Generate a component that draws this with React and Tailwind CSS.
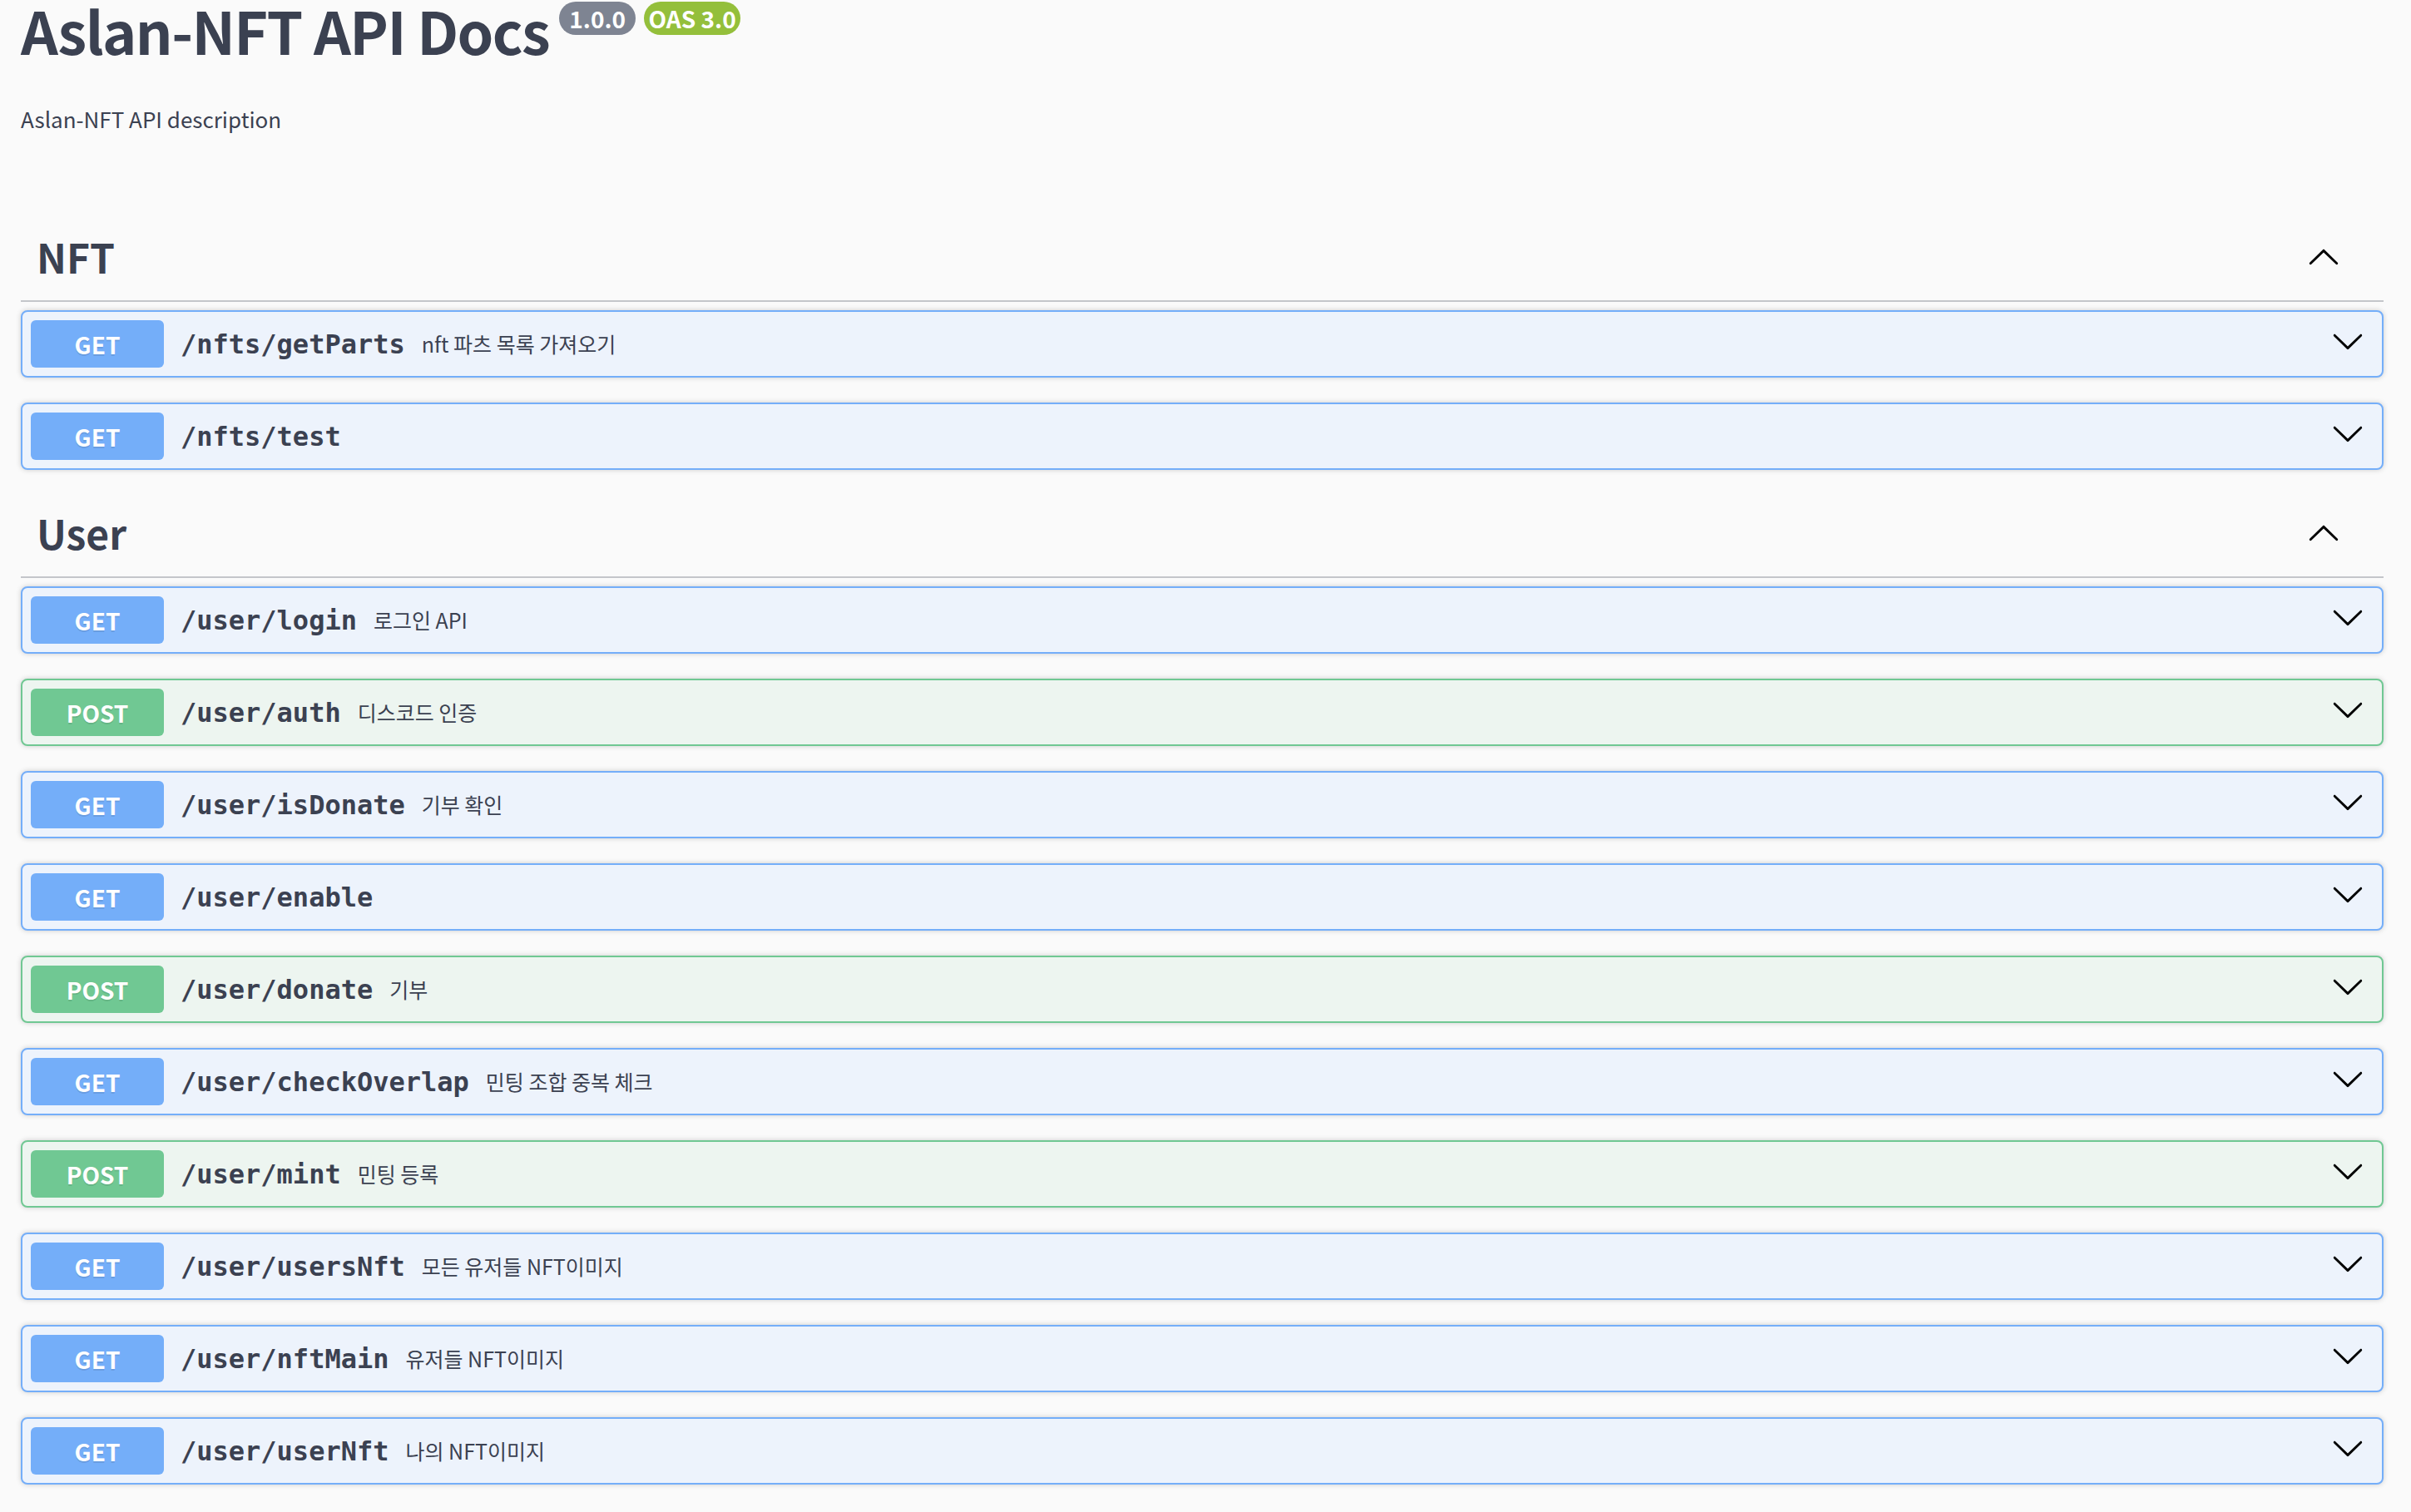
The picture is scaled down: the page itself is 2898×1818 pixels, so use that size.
import React from 'react';

const sans = "font-['Noto_Sans_CJK_KR','Noto_Sans',sans-serif]";

const sections = [
  {
    name: 'NFT',
    ops: [
      { method: 'GET', path: '/nfts/getParts', desc: 'nft 파츠 목록 가져오기' },
      { method: 'GET', path: '/nfts/test', desc: '' },
    ],
  },
  {
    name: 'User',
    ops: [
      { method: 'GET', path: '/user/login', desc: '로그인 API' },
      { method: 'POST', path: '/user/auth', desc: '디스코드 인증' },
      { method: 'GET', path: '/user/isDonate', desc: '기부 확인' },
      { method: 'GET', path: '/user/enable', desc: '' },
      { method: 'POST', path: '/user/donate', desc: '기부' },
      { method: 'GET', path: '/user/checkOverlap', desc: '민팅 조합 중복 체크' },
      { method: 'POST', path: '/user/mint', desc: '민팅 등록' },
      { method: 'GET', path: '/user/usersNft', desc: '모든 유저들 NFT이미지' },
      { method: 'GET', path: '/user/nftMain', desc: '유저들 NFT이미지' },
      { method: 'GET', path: '/user/userNft', desc: '나의 NFT이미지' },
    ],
  },
];

function Arrow({ up }) {
  return (
    <svg width="40" height="40" viewBox="0 0 20 20" className={up ? 'rotate-180' : ''}>
      <path
        fill="#000"
        d="M17.418 6.109c.272-.268.709-.268.979 0s.271.701 0 .969l-7.908 7.83c-.27.268-.707.268-.979 0l-7.908-7.83c-.27-.268-.27-.701 0-.969.271-.268.709-.268.979 0L10 13.25l7.418-7.141z"
      />
    </svg>
  );
}

function OpRow({ op }) {
  const post = op.method === 'POST';
  return (
    <div
      className={
        post
          ? 'mb-[30px] flex h-[81px] items-center rounded-[8px] border-2 border-[#70c893] bg-[#edf5f0] pl-[10px] pr-[21px] shadow-[0_0_6px_rgba(0,0,0,0.19)]'
          : 'mb-[30px] flex h-[81px] items-center rounded-[8px] border-2 border-[#74aef9] bg-[#edf3fc] pl-[10px] pr-[21px] shadow-[0_0_6px_rgba(0,0,0,0.19)]'
      }
    >
      <span
        className={`${sans} flex h-[57px] w-[160px] shrink-0 items-center justify-center rounded-[6px] text-[28px] font-bold text-white [text-shadow:0_2px_0_rgba(0,0,0,0.1)] ${
          post ? 'bg-[#70c893]' : 'bg-[#74aef9]'
        }`}
      >
        {op.method}
      </span>
      <span className="px-[20px] font-['DejaVu_Sans_Mono',monospace] text-[32px] font-bold text-[#3b4151]">
        {op.path}
      </span>
      <span className={`${sans} flex-1 text-[25px] text-[#3b4151]`}>{op.desc}</span>
      <div className="-mt-[8px]">
        <Arrow />
      </div>
    </div>
  );
}

export default function App() {
  return (
    <div className={`${sans} min-h-screen bg-[#fafafa] pl-[25px] pr-[33px] text-[#3b4151]`}>
      {/* Info */}
      <div className="flex items-start">
        <h1 className="text-[70px] font-bold leading-[72px] tracking-[-1.6px]">Aslan-NFT API Docs</h1>
        <span className="ml-[12px] mt-[2px] flex h-[40px] w-[92px] items-center justify-center rounded-full bg-[#7e8492] text-[28px] font-bold text-white">
          1.0.0
        </span>
        <span className="ml-[10px] mt-[2px] flex h-[40px] w-[116px] items-center justify-center rounded-full bg-[#94bf3b] text-[28px] font-bold text-white">
          OAS 3.0
        </span>
      </div>
      <p className="mt-[51px] text-[26px] leading-[40px]">Aslan-NFT API description</p>

      {/* Sections */}
      <div className="mt-[100px]">
        {sections.map((s) => (
          <div key={s.name}>
            <div className="mb-[10px] flex h-[100px] items-center border-b-2 border-[#c4c6ca] pb-[8px] pl-[19px] pr-[52px]">
              <h3 className="flex-1 text-[48px] font-bold">{s.name}</h3>
              <div className="mt-[4px]">
                <Arrow up />
              </div>
            </div>
            {s.ops.map((op) => (
              <OpRow key={op.path} op={op} />
            ))}
          </div>
        ))}
      </div>
    </div>
  );
}
